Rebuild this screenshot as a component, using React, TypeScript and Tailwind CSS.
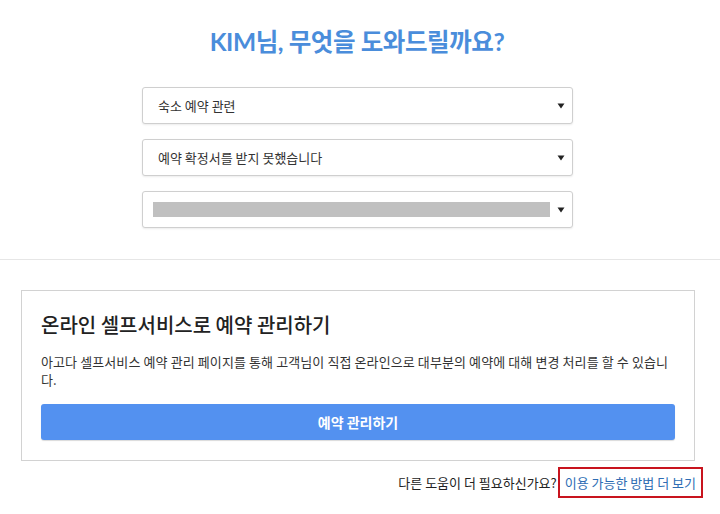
import React from "react";

const kr = { fontFamily: '"Noto Sans CJK KR", "Noto Sans", sans-serif' };

function Arrow() {
  return (
    <svg width="8" height="6" viewBox="0 0 8 6" className="shrink-0">
      <path d="M0.5 0.5 L7.5 0.5 L4 5.5 Z" fill="#222" />
    </svg>
  );
}

function SelectBox({ children }: { children: React.ReactNode }) {
  return (
    <div className="flex h-[37px] w-[431px] items-center justify-between rounded-[3px] border border-[#cfcfcf] bg-white pr-[7px] shadow-[0_1px_2px_rgba(0,0,0,0.08)]">
      {children}
      <Arrow />
    </div>
  );
}

export default function App() {
  return (
    <div className="min-h-[514px] w-[720px] bg-white text-[#333]" style={kr}>
      <h1
        className="pr-[6px] pt-[26px] text-center text-[24.5px] font-bold leading-[32px] tracking-[-0.4px] text-[#4a8ddb]"
        style={{ fontFamily: 'Lato, "Noto Sans CJK KR", sans-serif' }}
      >
        KIM님, 무엇을 도와드릴까요?
      </h1>

      <div className="ml-[142px] mt-[29px] flex flex-col gap-[15px]">
        <SelectBox>
          <span className="pl-[15px] text-[13px] text-[#333]">숙소 예약 관련</span>
        </SelectBox>
        <SelectBox>
          <span className="pl-[15px] text-[13px] text-[#333]">예약 확정서를 받지 못했습니다</span>
        </SelectBox>
        <SelectBox>
          <div className="ml-[10px] h-[15px] w-[397px] bg-[#c0c0c0]" />
        </SelectBox>
      </div>

      <div className="mt-[31px] h-px w-full bg-[#e6e6e6]" />

      <div className="ml-[21px] mt-[30px] w-[674px] border border-[#d2d2d2] px-[19px] pb-[20px] pt-[19px]">
        <h2 className="text-[20px] font-medium leading-[30px] text-[#222]">
          온라인 셀프서비스로 예약 관리하기
        </h2>
        <p className="mt-[13px] text-[13px] leading-[18px] tracking-[0.1px] text-[#333]">
          아고다 셀프서비스 예약 관리 페이지를 통해 고객님이 직접 온라인으로 대부분의 예약에 대해 변경 처리를 할 수 있습니다.
        </p>
        <button className="mt-[15px] flex h-[36px] w-full items-center justify-center rounded-[3px] bg-[#5391f0] text-[14px] font-bold text-white shadow-[0_1px_1px_rgba(0,0,0,0.15)]">
          예약 관리하기
        </button>
      </div>

      <div className="mt-[6px] flex items-center justify-end pr-[17px]">
        <span className="text-[13px] text-[#222]">다른 도움이 더 필요하신가요?</span>
        <span className="ml-[1px] flex h-[31px] items-center border-2 border-[#c8141e] px-[5px] text-[13px] text-[#2e6db4]">
          이용 가능한 방법 더 보기
        </span>
      </div>
    </div>
  );
}
